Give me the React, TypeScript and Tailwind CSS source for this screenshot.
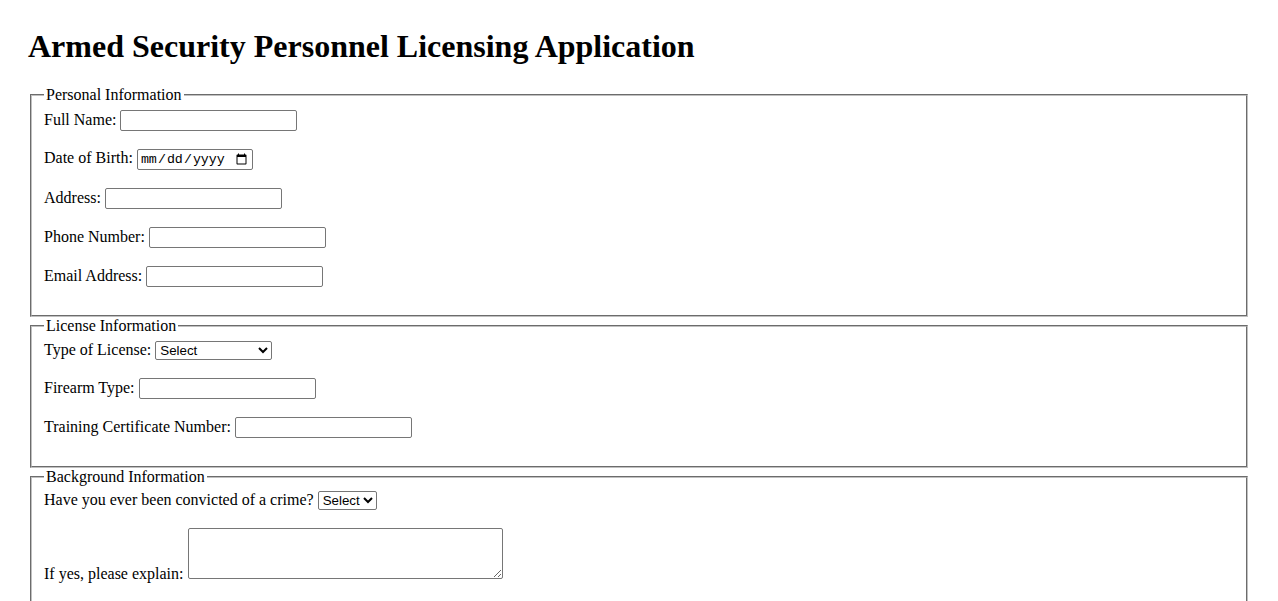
const inputCls =
  "bg-white border border-[#767676] rounded-[2px] px-[2px] py-[1px] h-[21px] w-[177px] font-['Liberation_Sans',Arial,sans-serif] text-[13.333px] text-black align-baseline"

const selectCls =
  "bg-white border border-[#767676] rounded-[2px] h-[19px] font-['Liberation_Sans',Arial,sans-serif] text-[13.333px] text-black align-baseline"

function Section({ title, children }: { title: string; children: React.ReactNode }) {
  return (
    <fieldset className="mx-[2px] border-2 [border-style:groove] border-[rgb(192,192,192)] pt-[5.6px] px-[12px] pb-[10px]">
      <legend className="px-[2px]">{title}</legend>
      {children}
    </fieldset>
  )
}

export default function App() {
  return (
    <div className="min-h-screen bg-white px-[28px] pt-[28px] pb-[8px] text-black font-['Liberation_Serif','Times_New_Roman',serif] text-[16px] leading-[normal]">
      <h1 className="text-[32px] font-bold leading-[normal] mb-[21.44px]">
        Armed Security Personnel Licensing Application
      </h1>

      <form>
        <Section title="Personal Information">
          <label>Full Name:</label> <input type="text" className={inputCls} />
          <br />
          <br />
          <label>Date of Birth:</label>{' '}
          <input
            type="date"
            className="bg-white border border-[#767676] rounded-[2px] px-[2px] py-[1px] h-[21px] w-[116px] font-['Liberation_Mono',monospace] text-[13.333px] text-black align-baseline"
          />
          <br />
          <br />
          <label>Address:</label> <input type="text" className={inputCls} />
          <br />
          <br />
          <label>Phone Number:</label> <input type="tel" className={inputCls} />
          <br />
          <br />
          <label>Email Address:</label> <input type="email" className={inputCls} />
          <br />
          <br />
        </Section>

        <Section title="License Information">
          <label>Type of License:</label>{' '}
          <select className={`${selectCls} w-[117px]`} defaultValue="">
            <option value="">Select</option>
            <option>Armed Guard</option>
            <option>Armed Escort</option>
          </select>
          <br />
          <br />
          <label>Firearm Type:</label> <input type="text" className={inputCls} />
          <br />
          <br />
          <label>Training Certificate Number:</label> <input type="text" className={inputCls} />
          <br />
          <br />
        </Section>

        <Section title="Background Information">
          <label>Have you ever been convicted of a crime?</label>{' '}
          <select className={`${selectCls} w-[59px]`} defaultValue="">
            <option value="">Select</option>
            <option>Yes</option>
            <option>No</option>
          </select>
          <br />
          <br />
          <label>If yes, please explain:</label>{' '}
          <textarea className="bg-white border border-[#767676] rounded-[2px] p-[2px] w-[315px] h-[51px] resize font-['Liberation_Mono',monospace] text-[13.333px] align-baseline" />
          <br />
          <br />
        </Section>

        <Section title="Declaration">
          <input type="checkbox" /> <label>I certify that the information provided is true and correct.</label>
          <br />
          <br />
        </Section>
        <br />
        <input type="submit" value="Submit Application" className="border border-[#767676] rounded-[2px] bg-[#efefef] px-[6px] py-[1px] font-['Liberation_Sans',Arial,sans-serif] text-[13.333px]" />
      </form>
    </div>
  )
}
